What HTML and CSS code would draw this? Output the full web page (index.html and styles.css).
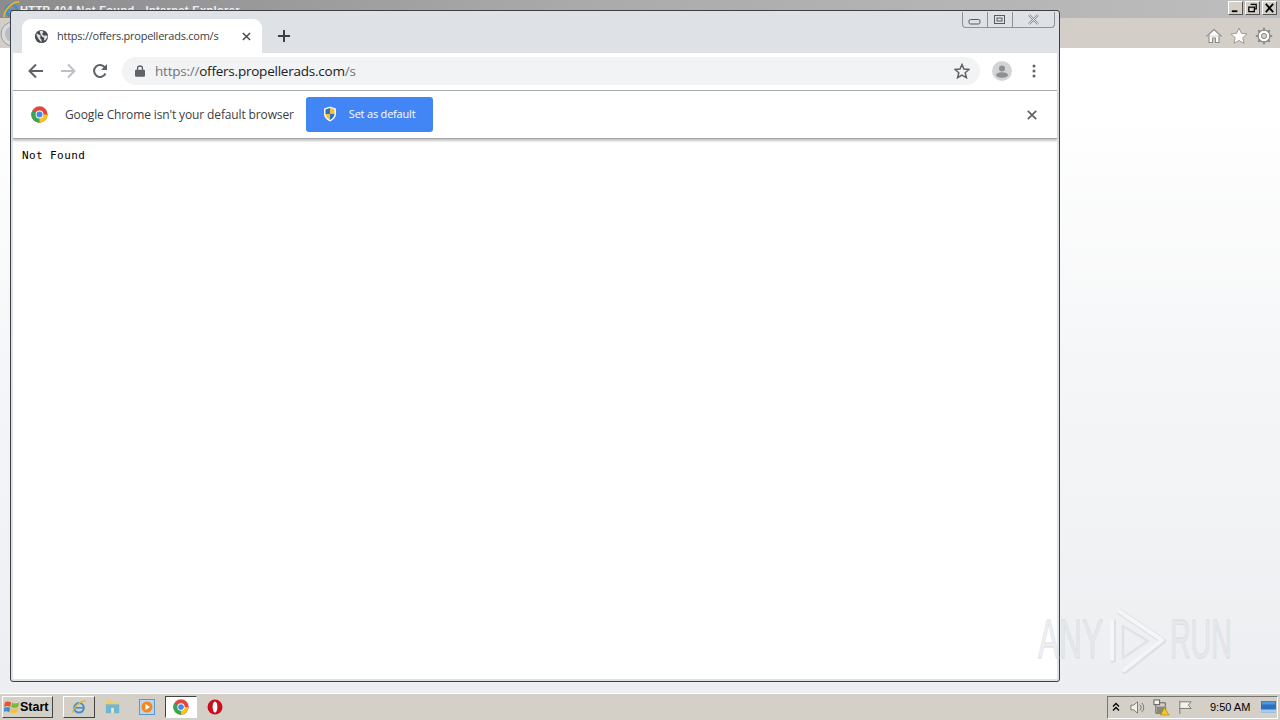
FILE: index.html
```html
<!DOCTYPE html>
<html lang="en">
<head>
<meta charset="utf-8">
<title>Not Found</title>
<link rel="stylesheet" href="styles.css">
</head>
<body>
<div class="desktop">
  <section class="ie-window">
    <header class="ie-title">
      <svg class="ie-logo" viewBox="0 0 20 20"><circle cx="10" cy="11" r="6.500" fill="none" stroke="#3d8fd0" stroke-width="3"/><path d="M5 11h10" stroke="#3d8fd0" stroke-width="2"/><path d="M1 19C2 9 11 1 19 1" fill="none" stroke="#e5b52c" stroke-width="2"/></svg>
      <span class="ie-title-text">HTTP 404 Not Found - Internet Explorer</span>
      <div class="ie-controls">
        <span class="ie-btn"><svg viewBox="0 0 14 13"><path d="M3 10h6" stroke="#000" stroke-width="2"/></svg></span>
        <span class="ie-btn"><svg viewBox="0 0 14 13"><path d="M5 2.500h6v5H9M3 5.500h6v5H3z" fill="none" stroke="#000" stroke-width="1.400"/></svg></span>
        <span class="ie-btn"><svg viewBox="0 0 14 13"><path d="M3 2l8 9M11 2l-8 9" stroke="#000" stroke-width="2"/></svg></span>
      </div>
    </header>
    <div class="ie-toolbar">
      <svg class="ie-back" viewBox="0 0 26 26"><circle cx="13" cy="13" r="12" fill="#d9dadb" stroke="#9a9b9c"/><circle cx="13" cy="13" r="8" fill="#b9bcc0"/></svg>
      <svg class="ie-tool" viewBox="0 0 18 18"><path d="M1.500 9.500L9 2.500l7.500 7M4 8.500v7h3.500v-4.500h3v4.500H14v-7" fill="#fff" stroke="#8b8b88" stroke-width="1.100"/></svg>
      <svg class="ie-tool" viewBox="0 0 18 18"><path d="M9 1l2.400 5.300 5.600.6-4.200 3.800 1.200 5.700L9 13.500 4 16.400l1.200-5.700L1 6.900l5.600-.6z" fill="#fff" stroke="#9a9a96"/></svg>
      <svg class="ie-tool" viewBox="0 0 18 18"><circle cx="9" cy="9" r="6" fill="#fff" stroke="#8b8b88" stroke-width="1.200"/><circle cx="9" cy="9" r="2.600" fill="#d4d0c8" stroke="#8b8b88"/><path d="M9 .8v3M9 14.200v3M.8 9h3M14.200 9h3M3.200 3.200l2 2M12.800 12.800l2 2M14.800 3.200l-2 2M5.200 12.800l-2 2" stroke="#8b8b88" stroke-width="2"/></svg>
    </div>
    <div class="ie-body"></div>
  </section>

  <section class="chrome-window">
    <div class="tabstrip">
      <div class="tab">
        <svg class="globe" viewBox="0 0 16 16"><circle cx="8" cy="8" r="7" fill="#45494d"/><path d="M2.500 4.500L7 7l-.5 2.500 1.500 2v3L5 11 3 7.500zM9 1.500l1 2.500-1.500 1L10 7h4l.5 1.500-2 3-2 1 .5-3L8.500 8 7 5.500 6 2.500z" fill="#dfe1e5"/></svg>
        <span class="tab-title">https://offers.propellerads.com/s</span>
        <svg class="tab-close" viewBox="0 0 10 10"><path d="M1 1l8 8M9 1L1 9" stroke="#45494d" stroke-width="1.600"/></svg>
      </div>
      <svg class="new-tab" viewBox="0 0 12 12"><path d="M6 0v12M0 6h12" stroke="#3c4043" stroke-width="2"/></svg>
      <div class="caption">
        <span class="cap-btn cap-min"><svg viewBox="0 0 14 8"><rect x="1" y="1.500" width="11" height="4.500" rx="1.500" fill="none" stroke="#555b63"/></svg></span>
        <span class="cap-btn cap-max"><svg viewBox="0 0 14 12"><rect x="1.500" y="1.500" width="10" height="8" fill="none" stroke="#555b63"/><rect x="4" y="4" width="5" height="3" fill="none" stroke="#555b63"/></svg></span>
        <span class="cap-btn cap-close"><svg viewBox="0 0 14 12"><path d="M2 1l9 9M11 1l-9 9" stroke="#8e949b" stroke-width="2.400"/><path d="M2 1l9 9M11 1l-9 9" stroke="#eef0f3" stroke-width=".8"/></svg></span>
      </div>
    </div>

    <div class="toolbar">
      <svg class="nav nav-back" viewBox="0 0 16 16"><path d="M15 8H2M8 1.500L1.500 8 8 14.500" fill="none" stroke="#5f6368" stroke-width="2"/></svg>
      <svg class="nav nav-fwd" viewBox="0 0 16 16"><path d="M1 8h13M8 1.500L14.500 8 8 14.500" fill="none" stroke="#bdc1c6" stroke-width="2"/></svg>
      <svg class="nav nav-reload" viewBox="0 0 16 16"><path d="M13.500 10.500A6 6 0 1 1 13 4.500" fill="none" stroke="#5f6368" stroke-width="2"/><path d="M15 1v6H9z" fill="#5f6368"/></svg>
      <div class="omnibox">
        <svg class="lock" viewBox="0 0 10 12"><path d="M2.500 5V3.500a2.500 2.500 0 0 1 5 0V5" fill="none" stroke="#5f6368" stroke-width="1.300"/><rect y="4.800" width="10" height="7" rx="1" fill="#5f6368"/></svg>
        <span class="url"><span class="url-dim">https://</span>offers.propellerads.com<span class="url-dim">/s</span></span>
        <svg class="bookmark" viewBox="0 0 16 16"><path d="M8 1.500l2 4.600 5 .4-3.800 3.300 1.200 4.900L8 12.100l-4.400 2.600 1.200-4.900L1 6.500l5-.4z" fill="none" stroke="#5f6368" stroke-width="1.500"/></svg>
      </div>
      <svg class="avatar" viewBox="0 0 20 20"><circle cx="10" cy="10" r="10" fill="#d3d4d6"/><circle cx="10" cy="7.500" r="3" fill="#8d9093"/><ellipse cx="10" cy="14" rx="6" ry="2.800" fill="#8d9093"/></svg>
      <svg class="menu" viewBox="0 0 4 14"><circle cx="2" cy="2" r="1.500" fill="#5f6368"/><circle cx="2" cy="7" r="1.500" fill="#5f6368"/><circle cx="2" cy="12" r="1.500" fill="#5f6368"/></svg>
    </div>

    <div class="infobar">
      <svg class="chrome-logo" viewBox="0 0 48 48"><circle cx="24" cy="24" r="23" fill="#e0483e"/><path d="M24 24L4 12.500A23 23 0 0 0 24 47z" fill="#3aa655"/><path d="M24 24h22.500A23 23 0 0 1 24 47z" fill="#f5c518"/><circle cx="24" cy="24" r="11" fill="#fff"/><circle cx="24" cy="24" r="8.500" fill="#4a86e8"/></svg>
      <span class="info-text">Google Chrome isn't your default browser</span>
      <button class="default-btn">
        <svg class="shield" viewBox="0 0 14 16"><path d="M7 .5l6 2v5.500c0 3.500-3 6-6 7.500-3-1.500-6-4-6-7.500V2.500z" fill="#f3f3f3"/><path d="M7 2L2.500 3.500V8H7z" fill="#2f6fc4"/><path d="M7 2l4.500 1.500V8H7z" fill="#f2c230"/><path d="M2.500 8H7v6C5 13 3 11 2.500 8z" fill="#f2c230"/><path d="M11.500 8H7v6c2-1 4-3 4.500-6z" fill="#2f6fc4"/></svg>
        <span>Set as default</span>
      </button>
      <svg class="info-close" viewBox="0 0 10 10"><path d="M.8.8l8.400 8.400M9.200.8L.8 9.200" stroke="#5f6368" stroke-width="1.700"/></svg>
    </div>

    <main class="page">
      <pre class="not-found">Not Found</pre>
    </main>
  </section>

  <svg class="watermark" viewBox="0 0 200 66">
    <g class="wm-text">
      <text transform="translate(1 50) scale(.565 1)">ANY</text>
      <text transform="translate(133 50) scale(.51 1)">RUN</text>
    </g>
    <path class="wm-logo-shade" d="M76 14v38M83 4l43 29-38 30" />
    <path class="wm-logo" d="M75 13v38M82 3l43 29-38 30" />
    <path class="wm-logo-inner" d="M86 18l25 15-25 17z" />
  </svg>

  <footer class="taskbar">
    <button class="start">
      <svg viewBox="0 0 18 18"><path d="M1 4c2-1.500 4-1.500 7 0L7 9C4.500 7.500 2.500 7.500 0 9z" fill="#e2572c"/><path d="M9 4c2.500 1.500 5 1.500 8 0l-1 5c-3 1.500-5 1.500-8 0z" fill="#7db93f"/><path d="M0 10c2.500-1.500 4.500-1.500 7 0l-1 5c-2.500-1.500-4.500-1.500-7 0z" fill="#3f8fd6"/><path d="M8 10c2.500 1.500 5 1.500 8 0l-1 5c-3 1.500-5 1.500-8 0z" fill="#f3c232"/></svg>
      <span>Start</span>
    </button>
    <span class="task task-raised">
      <svg viewBox="0 0 20 20"><circle cx="10" cy="11" r="6" fill="none" stroke="#3d8fd0" stroke-width="2.500"/><path d="M5 11h10" stroke="#3d8fd0" stroke-width="2"/><path d="M2 17C4 9 11 3 18 2" fill="none" stroke="#e5b52c" stroke-width="1.800"/></svg>
    </span>
    <span class="task">
      <svg viewBox="0 0 18 18"><path d="M1 1h6l1 2h7v5H1z" fill="#e9cf7a"/><path d="M1 6h15v10H1z" fill="#70b6d3"/><path d="M7 10h3v6H7z" fill="#f1e6b8"/></svg>
    </span>
    <span class="task">
      <svg viewBox="0 0 16 16"><rect x=".5" y=".5" width="15" height="15" fill="#bcd4ee" stroke="#5e97cf"/><circle cx="8" cy="8" r="5.500" fill="#ee8a1e"/><path d="M6.500 5l4.500 3-4.500 3z" fill="#fff"/></svg>
    </span>
    <span class="task task-active">
      <svg viewBox="0 0 48 48"><circle cx="24" cy="24" r="23" fill="#e0483e"/><path d="M24 24L4 12.500A23 23 0 0 0 24 47z" fill="#3aa655"/><path d="M24 24h22.500A23 23 0 0 1 24 47z" fill="#f5c518"/><circle cx="24" cy="24" r="11" fill="#fff"/><circle cx="24" cy="24" r="8.500" fill="#4a86e8"/></svg>
    </span>
    <span class="task">
      <svg viewBox="0 0 16 16"><circle cx="8" cy="8" r="7.500" fill="#c8101c"/><ellipse cx="8" cy="8" rx="2.400" ry="5.500" fill="#fff"/></svg>
    </span>
    <div class="tray">
      <svg class="tray-up" viewBox="0 0 8 10"><path d="M1 4.500l3-3 3 3M1 8.500l3-3 3 3" fill="none" stroke="#000" stroke-width="1.300"/></svg>
      <svg class="tray-icon" viewBox="0 0 18 16"><path d="M2 5.500h3L9 2v12l-4-3.500H2z" fill="#f1efea" stroke="#77756f"/><path d="M11.500 5a4 4 0 0 1 0 6M13.500 3a7 7 0 0 1 0 10" fill="none" stroke="#77756f"/></svg>
      <svg class="tray-icon" viewBox="0 0 18 18"><rect x="1" y="1" width="6" height="5" fill="#f4f2ec" stroke="#5c5a54"/><path d="M3 6v9h8M7 4h6v4" fill="none" stroke="#5c5a54"/><rect x="4" y="8" width="10" height="8" fill="#8a887f"/><path d="M12 9l5 8H8z" fill="#f4c91f" stroke="#9b7d12" stroke-width=".6"/></svg>
      <svg class="tray-icon" viewBox="0 0 18 16"><path d="M3 1v14M3 2h12l-3 3.500 3 3.500H3" fill="#f4f2ec" stroke="#77756f"/></svg>
      <time class="clock">9:50 AM</time>
      <svg class="tray-desk" viewBox="0 0 18 14"><rect width="18" height="14" fill="#2d6fc0"/><rect y="10" width="18" height="4" fill="#a9cbe9"/><rect x="1" y="1" width="16" height="3" fill="#4f96da"/></svg>
    </div>
  </footer>
</div>
</body>
</html>
```

FILE: styles.css
```css
* { box-sizing: border-box; }
html, body { margin: 0; padding: 0; }
body {
  width: 1280px;
  height: 720px;
  overflow: hidden;
  font-family: "Liberation Sans", Arial, sans-serif;
}
svg { display: block; flex: none; }

.desktop {
  position: relative;
  width: 1280px;
  height: 720px;
  display: flex;
  flex-direction: column;
  background: #eef0f3;
}

/* background IE window */
.ie-window {
  height: 693px;
  display: flex;
  flex-direction: column;
}
.ie-title {
  height: 18px;
  background: linear-gradient(90deg, #8c8c8c 0, #aaaaaa 45%, #bdbdbd 100%);
  display: flex;
  align-items: flex-start;
  padding: 1px 2px 0 3px;
  flex: none;
}
.ie-logo { width: 17px; height: 17px; }
.ie-title-text {
  margin: 1px 0 0 0;
  font: bold 11px/16px "Liberation Sans", sans-serif;
  letter-spacing: 0.37px;
  color: #eceff2;
  white-space: nowrap;
}
.ie-controls { margin-left: auto; display: flex; gap: 2px; padding-right: 1px; }
.ie-btn {
  width: 15px;
  height: 14px;
  background: #d4d0c8;
  border: 1px solid;
  border-color: #fff #555 #555 #fff;
}
.ie-btn svg { width: 13px; height: 12px; }
.ie-toolbar {
  height: 30px;
  flex: none;
  background: #d3cec7;
  display: flex;
  align-items: center;
  gap: 7px;
  padding: 6px 7px 0 0;
}
.ie-back { width: 26px; height: 26px; margin: -4px auto 0 0; }
.ie-tool { width: 18px; height: 18px; }
.ie-body {
  flex: 1;
  background: linear-gradient(180deg, #fff 0, #fff 10%, #f6f7f8 45%, #eceef1 100%);
}

.watermark {
  position: absolute;
  left: 1037px;
  top: 608px;
  width: 200px;
  height: 66px;
  pointer-events: none;
}
.wm-text text {
  font: 400 56px "Liberation Sans", sans-serif;
  fill: rgba(222, 225, 230, .5);
  stroke: rgba(210, 213, 218, .75);
  stroke-width: .8px;
}
.wm-logo-shade { fill: none; stroke: #d9dce1; stroke-width: 6px; stroke-linejoin: round; stroke-linecap: round; opacity: .8; }
.wm-logo { fill: none; stroke: #f4f5f7; stroke-width: 4px; stroke-linejoin: round; stroke-linecap: round; }
.wm-logo-inner { fill: none; stroke: #dfe2e6; stroke-width: 2.500px; stroke-linejoin: round; }

/* chrome window */
.chrome-window {
  position: absolute;
  left: 10px;
  top: 10px;
  width: 1050px;
  height: 672px;
  border: 1px solid #3b4047;
  border-radius: 3px;
  background: #dee1e6;
  padding: 1px 2px 2px 2px;
  display: flex;
  flex-direction: column;
}
.tabstrip {
  position: relative;
  height: 41px;
  flex: none;
  background: #dee1e6;
  display: flex;
  align-items: flex-end;
}
.tab {
  width: 240px;
  height: 34px;
  margin-left: 9px;
  background: #fff;
  border-radius: 9px 9px 0 0;
  display: flex;
  align-items: center;
  padding: 0 11px 0 12px;
  flex: none;
}
.globe { width: 15px; height: 15px; }
.tab-title {
  margin-left: 8px;
  font: 11px/16px "Open Sans", "DejaVu Sans", sans-serif;
  letter-spacing: -0.25px;
  color: #3c4043;
  white-space: nowrap;
  flex: 1;
}
.tab-close { width: 9px; height: 9px; }
.new-tab { width: 12px; height: 12px; margin: 0 0 11px 16px; }
.caption {
  position: absolute;
  right: 2px;
  top: 0;
  height: 16px;
  display: flex;
  border: 1px solid #8c929a;
  border-top: 0;
  border-radius: 0 0 4px 4px;
}
.cap-btn { display: flex; align-items: center; justify-content: center; height: 15px; }
.cap-min { width: 25px; border-right: 1px solid #8c929a; }
.cap-max { width: 25px; border-right: 1px solid #8c929a; }
.cap-close { width: 41px; }
.cap-min svg { width: 14px; height: 8px; margin-top: 4px; }
.cap-max svg { width: 14px; height: 12px; }
.cap-close svg { width: 14px; height: 12px; }

.toolbar {
  height: 38px;
  flex: none;
  background: #fff;
  border-bottom: 1px solid #a9abad;
  display: flex;
  align-items: center;
  padding: 0 16px 2px 15px;
}
.nav { width: 16px; height: 16px; }
.nav-fwd { margin-left: 16px; }
.nav-reload { margin-left: 16px; }
.omnibox {
  width: 858px;
  height: 28px;
  margin-left: 14px;
  background: #f1f3f4;
  border-radius: 14px;
  display: flex;
  align-items: center;
  padding: 0 10px 0 13px;
}
.lock { width: 10px; height: 12px; }
.url {
  margin-left: 10px;
  font: 13.500px/20px "Open Sans", "DejaVu Sans", sans-serif;
  letter-spacing: -0.23px;
  color: #202124;
  white-space: nowrap;
  flex: 1;
}
.url-dim { color: #70757a; }
.bookmark { width: 16px; height: 16px; }
.avatar { width: 20px; height: 20px; margin-left: 12px; }
.menu { width: 4px; height: 14px; margin-left: 20px; }

.infobar {
  height: 48px;
  flex: none;
  background: #fff;
  border-bottom: 1px solid #a3a5a7;
  box-shadow: 0 2px 2px rgba(60, 64, 67, .3);
  display: flex;
  align-items: center;
  padding: 0 20px 0 18px;
  position: relative;
}
.chrome-logo { width: 17px; height: 17px; }
.info-text {
  margin-left: 17px;
  font: 12px/16px "Open Sans", "DejaVu Sans", sans-serif;
  letter-spacing: -0.13px;
  color: #3c4043;
  white-space: nowrap;
}
.default-btn {
  width: 127px;
  height: 35px;
  margin-left: 12px;
  background: #4285f4;
  border: 0;
  border-radius: 3px;
  display: flex;
  align-items: center;
  padding: 0 0 2px 17px;
  font: 11px/16px "Open Sans", "DejaVu Sans", sans-serif;
  letter-spacing: -0.2px;
  color: #fff;
}
.shield { width: 14px; height: 16px; margin-right: 12px; }
.info-close { width: 10px; height: 10px; margin-left: auto; }

.page { flex: 1; background: #fff; padding: 10px 9px; }
.not-found {
  margin: 0;
  font: 11px/14px "DejaVu Sans Mono", "Liberation Mono", monospace;
  letter-spacing: 0.4px;
  color: #000;
}

/* taskbar */
.taskbar {
  flex: 1;
  background: #d4d0c8;
  border-top: 1px solid #fff;
  display: flex;
  align-items: center;
  padding: 0 0 0 2px;
}
.start {
  width: 51px;
  height: 22px;
  background: #d4d0c8;
  border: 1px solid;
  border-color: #fff #444 #444 #fff;
  display: flex;
  align-items: center;
  gap: 0;
  padding: 0 0 0 1px;
  font: bold 12.500px/16px "Liberation Sans", sans-serif;
  color: #000;
  margin-right: 10px;
}
.start svg { width: 16px; height: 16px; }
.task {
  width: 32px;
  height: 22px;
  margin-right: 2px;
  display: flex;
  align-items: center;
  justify-content: center;
}
.task svg { width: 16px; height: 16px; }
.task-raised { border: 1px solid; border-color: #fff #444 #444 #fff; margin-right: 2px; }
.task-active { background: #fff; border: 1px solid; border-color: #444 #fff #fff #444; }
.tray {
  margin-left: auto;
  margin-right: 2px;
  width: 171px;
  height: 23px;
  border: 1px solid;
  border-color: #77756f #fff #fff #77756f;
  display: flex;
  align-items: center;
  padding-left: 4px;
}
.tray-up { width: 8px; height: 10px; margin-right: 9px; }
.tray-icon { width: 17px; height: 17px; margin-right: 7px; }
.clock {
  margin-left: 9px;
  font: 11px/14px "Liberation Sans", sans-serif;
  color: #000;
  white-space: nowrap;
}
.tray-desk { width: 15px; height: 12px; margin-left: auto; margin-right: 1px; }
```
